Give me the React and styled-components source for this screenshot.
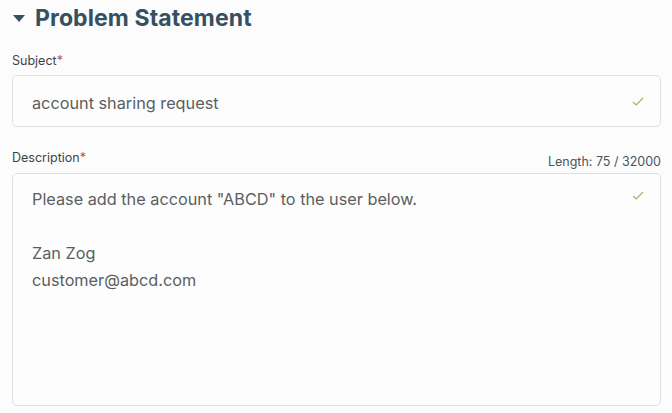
import React from "react";
import styled, { createGlobalStyle } from "styled-components";

const GlobalStyle = createGlobalStyle`
  html, body {
    margin: 0;
    padding: 0;
    background: #fcfcfd;
  }
  body {
    font-family: "Inter", "Liberation Sans", sans-serif;
  }
`;

const Section = styled.div`
  width: 672px;
  height: 413px;
  padding: 4px 11px 0 12px;
  box-sizing: border-box;
`;

const Heading = styled.h2`
  display: flex;
  align-items: center;
  gap: 10px;
  margin: 0 0 20px 0;
  font-size: 23px;
  line-height: 28px;
  font-weight: 700;
  color: #36505f;
  letter-spacing: 0.1px;
`;

const Caret = styled.span`
  width: 0;
  height: 0;
  border-left: 6.5px solid transparent;
  border-right: 6.5px solid transparent;
  border-top: 7px solid #36505f;
  margin-left: 1px;
`;

const LabelRow = styled.div`
  display: flex;
  justify-content: space-between;
  align-items: flex-end;
  height: 16px;
  margin-bottom: ${(p) => p.gap || 7}px;
`;

const Label = styled.label`
  font-size: 12.5px;
  color: #3d4449;
  span {
    color: #c0504d;
  }
`;

const Counter = styled.span`
  font-size: 12.5px;
  color: #47555d;
  position: relative;
  top: 4px;
`;

const Box = styled.div`
  position: relative;
  box-sizing: border-box;
  height: ${(p) => p.h}px;
  border: 1px solid #dfe0e2;
  border-radius: 5px;
  background: #fdfdfd;
  padding: ${(p) => p.pad};
  font-size: 16.25px;
  color: #5a5e61;
  line-height: 27px;
  margin-bottom: ${(p) => p.mb || 0}px;
`;

const Line = styled.div`
  min-height: 27px;
`;

const Check = styled.svg`
  position: absolute;
  right: 16px;
  top: ${(p) => p.top}px;
`;

function Tick({ top }) {
  return (
    <Check top={top} width="12" height="9" viewBox="0 0 12 9">
      <path d="M1 4.8 L4.2 8 L11 1" fill="none" stroke="#9fb270" strokeWidth="1.2" />
    </Check>
  );
}

export default function App() {
  return (
    <>
      <GlobalStyle />
      <Section>
        <Heading>
          <Caret />
          Problem Statement
        </Heading>
        <LabelRow>
          <Label>
            Subject<span>*</span>
          </Label>
        </LabelRow>
        <Box h={52} pad="14px 19px 0" mb={22}>
          account sharing request
          <Tick top={21} />
        </Box>
        <LabelRow gap={8}>
          <Label>
            Description<span>*</span>
          </Label>
          <Counter>Length: 75 / 32000</Counter>
        </LabelRow>
        <Box h={233} pad="12px 19px">
          <Line>Please add the account "ABCD" to the user below.</Line>
          <Line />
          <Line>Zan Zog</Line>
          <Line>customer@abcd.com</Line>
          <Tick top={17} />
        </Box>
      </Section>
    </>
  );
}
